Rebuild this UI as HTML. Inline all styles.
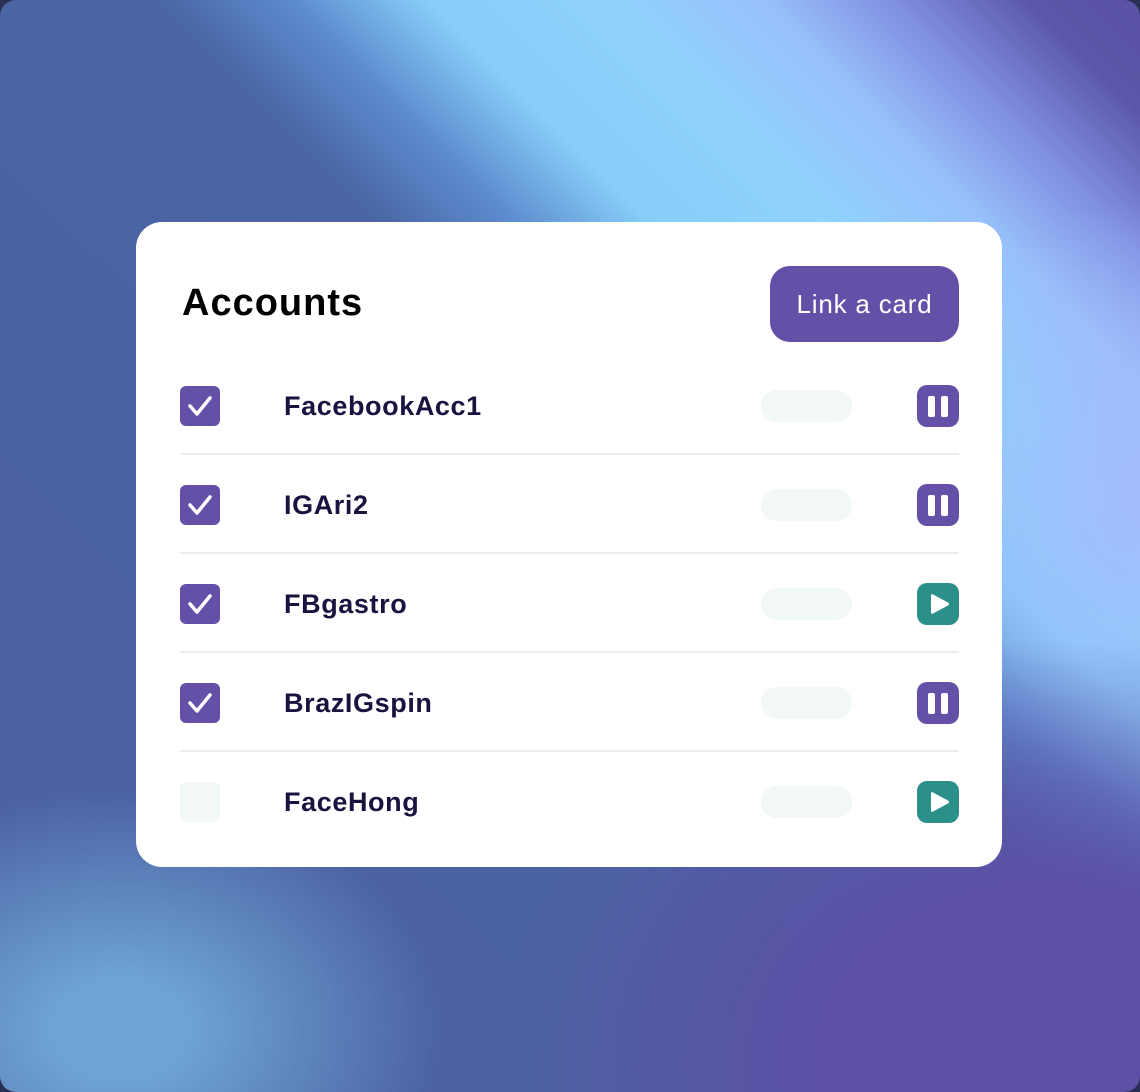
<!DOCTYPE html>
<html><head><meta charset="utf-8"><style>
*{margin:0;padding:0;box-sizing:border-box}
html,body{width:1140px;height:1092px;overflow:hidden;background:#2a2f55;font-family:"Liberation Sans",sans-serif}
.bg{position:absolute;left:0;top:0;width:1140px;height:1092px;border-radius:16px;overflow:hidden;
background:
radial-gradient(ellipse 560px 420px at 1060px 1060px, rgba(93,80,166,1) 40%, rgba(93,80,166,0) 100%),
radial-gradient(ellipse 320px 240px at 120px 1030px, rgba(110,165,212,1) 20%, rgba(110,165,212,0) 100%),
radial-gradient(ellipse 260px 300px at 1140px 500px, rgba(165,185,252,0.9), rgba(165,185,252,0) 100%),
linear-gradient(45deg,#4d62a3 0%,#4b63a3 40%,#4a66a5 56%,#5d8ccf 62%,#86cdf8 68%,#8fd2fb 76%,#98c0fb 83%,#7f8ee0 89%,#5c57a8 95%,#5a52a5 100%);}
.card{position:absolute;left:136px;top:222px;width:866px;height:645px;background:#fff;border-radius:26px;font-family:"Liberation Sans",sans-serif}
h1{position:absolute;left:46px;top:60px;font-size:38px;font-weight:700;color:#000;letter-spacing:1px}
.btn{position:absolute;left:634px;top:44px;width:189px;height:76px;border-radius:20px;background:#6550a8;color:#fff;font-size:26px;line-height:76px;text-align:center;letter-spacing:0.8px}
.row{position:absolute;left:44px;width:779px;height:42px}
.cb{position:absolute;left:0;top:1px;width:40px;height:40px;border-radius:6px;background:#6550a8}
.cb.off{background:#f2f8f7}
.name{position:absolute;left:104px;top:6px;font-size:27px;font-weight:700;color:#1a1340;letter-spacing:0.6px}
.pill{position:absolute;left:581px;top:5px;width:91px;height:32px;border-radius:16px;background:#f1f8f7}
.ic{position:absolute;left:737px;top:0;width:42px;height:42px;border-radius:10px;background:#6550a8}
.ic.play{background:#2b8f8a}
.div{position:absolute;left:44px;width:779px;height:2px;background:#ededed}
</style></head><body>
<div class="bg"></div>
<div class="card">
<h1>Accounts</h1>
<div class="btn">Link a card</div>

<div class="row" style="top:163px"><div class="cb"><svg width="40" height="40"><path d="M10 20 L17 28 L30 12" fill="none" stroke="#fff" stroke-width="3.5" stroke-linecap="round" stroke-linejoin="round"/></svg></div><div class="name">FacebookAcc1</div><div class="pill"></div><div class="ic"><svg width="42" height="42"><rect x="11" y="11" width="7" height="21" rx="2" fill="#fff"/><rect x="24" y="11" width="7" height="21" rx="2" fill="#fff"/></svg></div></div>
<div class="div" style="top:231px"></div>

<div class="row" style="top:262px"><div class="cb"><svg width="40" height="40"><path d="M10 20 L17 28 L30 12" fill="none" stroke="#fff" stroke-width="3.5" stroke-linecap="round" stroke-linejoin="round"/></svg></div><div class="name">IGAri2</div><div class="pill"></div><div class="ic"><svg width="42" height="42"><rect x="11" y="11" width="7" height="21" rx="2" fill="#fff"/><rect x="24" y="11" width="7" height="21" rx="2" fill="#fff"/></svg></div></div>
<div class="div" style="top:330px"></div>

<div class="row" style="top:361px"><div class="cb"><svg width="40" height="40"><path d="M10 20 L17 28 L30 12" fill="none" stroke="#fff" stroke-width="3.5" stroke-linecap="round" stroke-linejoin="round"/></svg></div><div class="name">FBgastro</div><div class="pill"></div><div class="ic play"><svg width="42" height="42"><path d="M14 12.5 Q14 10.5 16 11.5 L31 19.5 Q33 21 31 22.5 L16 30.5 Q14 31.5 14 29.5 Z" fill="#fff"/></svg></div></div>
<div class="div" style="top:429px"></div>

<div class="row" style="top:460px"><div class="cb"><svg width="40" height="40"><path d="M10 20 L17 28 L30 12" fill="none" stroke="#fff" stroke-width="3.5" stroke-linecap="round" stroke-linejoin="round"/></svg></div><div class="name">BrazIGspin</div><div class="pill"></div><div class="ic"><svg width="42" height="42"><rect x="11" y="11" width="7" height="21" rx="2" fill="#fff"/><rect x="24" y="11" width="7" height="21" rx="2" fill="#fff"/></svg></div></div>
<div class="div" style="top:528px"></div>

<div class="row" style="top:559px"><div class="cb off"></div><div class="name">FaceHong</div><div class="pill"></div><div class="ic play"><svg width="42" height="42"><path d="M14 12.5 Q14 10.5 16 11.5 L31 19.5 Q33 21 31 22.5 L16 30.5 Q14 31.5 14 29.5 Z" fill="#fff"/></svg></div></div>
</div>
</body></html>
